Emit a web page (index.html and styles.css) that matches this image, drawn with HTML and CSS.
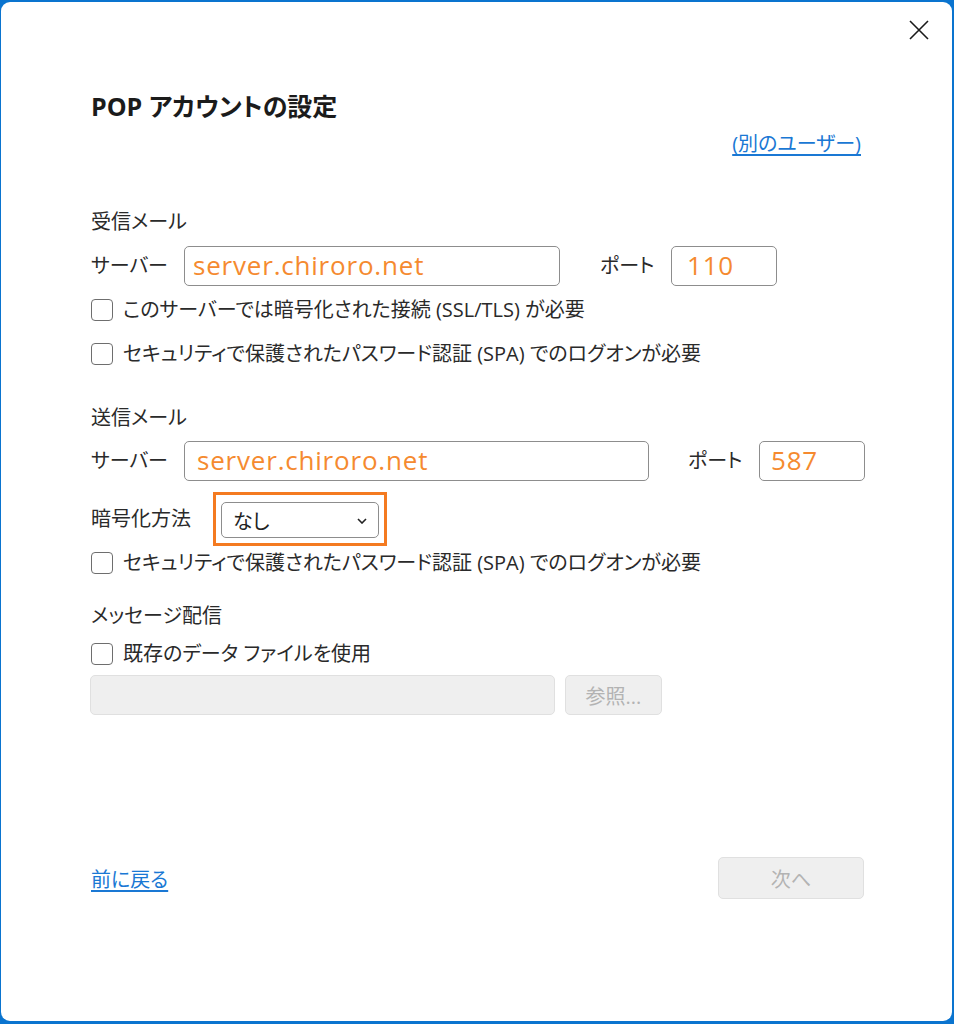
FILE: index.html
```html
<!DOCTYPE html>
<html lang="ja">
<head>
<meta charset="utf-8">
<title>POP アカウントの設定</title>
<link rel="stylesheet" href="styles.css">
</head>
<body>
<div class="dialog">
  <button class="close" aria-label="閉じる">
    <svg width="20" height="20" viewBox="0 0 20 20"><path d="M1 1 L19 19 M19 1 L1 19" stroke="#1a1a1a" stroke-width="1.6" fill="none"/></svg>
  </button>

  <h1 class="title">POP アカウントの設定</h1>
  <div class="link-row"><a class="link" href="#">(別のユーザー)</a></div>

  <div class="section-label first">受信メール</div>
  <div class="field-row">
    <span class="lbl lbl-server">サーバー</span>
    <div class="input input-in">server.chiroro.net</div>
    <span class="lbl lbl-port">ポート</span>
    <div class="input input-port">110</div>
  </div>
  <label class="check c1"><span class="box"></span>このサーバーでは暗号化された接続 (SSL/TLS) が必要</label>
  <label class="check c2"><span class="box"></span>セキュリティで保護されたパスワード認証 (SPA) でのログオンが必要</label>

  <div class="section-label second">送信メール</div>
  <div class="field-row out">
    <span class="lbl lbl-server">サーバー</span>
    <div class="input input-out">server.chiroro.net</div>
    <span class="lbl lbl-port">ポート</span>
    <div class="input input-port">587</div>
  </div>
  <div class="enc-row">
    <span class="lbl lbl-enc">暗号化方法</span>
    <div class="highlight">
      <div class="select">なし
        <svg class="chev" width="10" height="6" viewBox="0 0 10 6"><path d="M1 1 L5 5 L9 1" stroke="#222" stroke-width="1.6" fill="none"/></svg>
      </div>
    </div>
  </div>
  <label class="check c3"><span class="box"></span>セキュリティで保護されたパスワード認証 (SPA) でのログオンが必要</label>

  <div class="section-label third">メッセージ配信</div>
  <label class="check c4"><span class="box"></span>既存のデータ ファイルを使用</label>
  <div class="file-row">
    <div class="input disabled file-input"></div>
    <div class="btn disabled browse">参照...</div>
  </div>

  <div class="footer">
    <a class="link" href="#">前に戻る</a>
    <div class="btn disabled next">次へ</div>
  </div>
</div>
</body>
</html>
```
FILE: styles.css
```css
html, body {
  margin: 0;
  padding: 0;
  height: 1024px;
  background: #0a74cf;
  overflow: hidden;
}
body {
  font-family: "Open Sans", "Noto Sans CJK JP", sans-serif;
  font-feature-settings: "palt";
  color: #2a2a2a;
  font-size: 20px;
}
.dialog {
  position: relative;
  box-sizing: border-box;
  margin: 2px 2px 0 1px;
  height: 1019px;
  background: #fff;
  border-radius: 9px;
  padding: 89px 88px 122px 89px;
  display: flex;
  flex-direction: column;
}
.close {
  position: absolute;
  top: 15px;
  right: 20px;
  width: 26px;
  height: 26px;
  border: 0;
  background: transparent;
  padding: 3px;
  display: flex;
  align-items: center;
  justify-content: center;
}
.title {
  margin: 0 0 0 1px;
  height: 30px;
  line-height: 30px;
  font-size: 25px;
  font-weight: 700;
  color: #1b1b1b;
}
.link-row {
  margin-top: 9px;
  height: 28px;
  line-height: 28px;
  display: flex;
  justify-content: flex-end;
  padding-right: 3px;
}
.link {
  color: #1a78d4;
  text-decoration: underline;
  text-underline-offset: 3px;
  font-size: 20px;
}
.section-label {
  height: 28px;
  line-height: 28px;
  padding-left: 1px;
}
.section-label.first { margin-top: 50px; }
.section-label.second { margin-top: 36px; }
.section-label.third { margin-top: 25px; }
.field-row {
  margin-top: 10px;
  display: flex;
  align-items: center;
  height: 40px;
}
.field-row > * { flex: none; }
.field-row.out { margin-top: 9px; }
.lbl {
  line-height: 28px;
  padding-left: 1px;
  box-sizing: border-box;
}
.lbl-server { width: 94px; }
.lbl-port { width: 72px; margin-left: 39px; }
.field-row.out .lbl-port { margin-left: 38px; }
.input {
  box-sizing: border-box;
  height: 40px;
  border: 1px solid #8d8d8d;
  border-radius: 5px;
  color: #f58a2f;
  font-size: 26px;
  letter-spacing: 0.8px;
  line-height: 36px;
  padding-left: 8px;
}
.input-in { width: 376px; }
.input-out { width: 465px; padding-left: 12px; }
.input-port { width: 106px; padding-left: 15px; }
.field-row.out .input-port { padding-left: 11px; }
.check {
  display: flex;
  align-items: center;
  height: 28px;
  line-height: 28px;
  padding-left: 1px;
}
.box {
  box-sizing: border-box;
  width: 22px;
  height: 22px;
  border: 1.5px solid #6e6e6e;
  border-radius: 4px;
  margin-right: 10px;
  flex: none;
}
.c1 { margin-top: 10px; }
.c2 { margin-top: 16px; }
.c3 { margin-top: 3px; }
.c4 { margin-top: 10px; }
.enc-row {
  margin-top: 11px;
  display: flex;
  align-items: center;
  height: 54px;
}
.lbl-enc { width: 123px; flex: none; }
.highlight {
  box-sizing: border-box;
  width: 174px;
  height: 54px;
  border: 3px solid #f47a20;
  padding: 7px 5px 5px 5px;
}
.select {
  box-sizing: border-box;
  height: 36px;
  border: 1px solid #8d8d8d;
  border-radius: 5px;
  display: flex;
  align-items: center;
  justify-content: space-between;
  padding: 0 11px 0 11px;
  color: #222;
  font-size: 20px;
}
.chev { margin-top: 1px; }
.file-row {
  margin-top: 7px;
  display: flex;
  gap: 10px;
  height: 40px;
}
.disabled {
  background: #efefef;
  border: 1px solid #e0e0e0;
  border-radius: 5px;
  box-sizing: border-box;
}
.file-input { width: 465px; }
.btn {
  color: #b3b3b3;
  display: flex;
  align-items: center;
  justify-content: center;
  font-size: 20px;
}
.browse { width: 97px; height: 40px; }
.footer {
  margin-top: auto;
  display: flex;
  justify-content: space-between;
  align-items: center;
  height: 42px;
  padding-left: 1px;
}
.next { width: 146px; height: 42px; }
```
